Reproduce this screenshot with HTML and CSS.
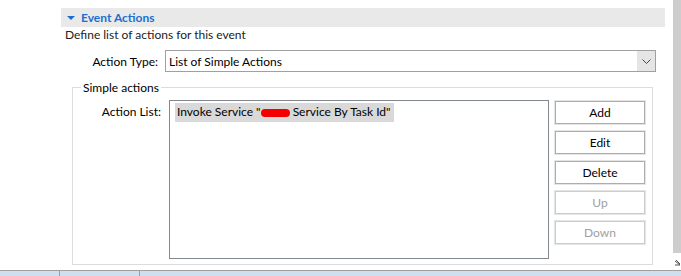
FILE: index.html
```html
<!DOCTYPE html>
<html lang="en">
<head>
  <meta charset="UTF-8">
  <meta name="viewport" content="width=device-width, initial-scale=1.0">
  <title>Event Actions</title>
  <link rel="stylesheet" href="styles.css">
</head>
<body>

  <div class="window">
    <div class="main">
      <div class="content">

        <div class="section-header">
          <span class="twisty"></span>
          <span class="section-title">Event Actions</span>
        </div>
        <div class="section-desc">Define list of actions for this event</div>

        <div class="type-row">
          <label class="field-label" for="actionType">Action Type:</label>
          <div class="combo" id="actionType">
            <span class="combo-text">List of Simple Actions</span>
            <span class="combo-btn">
              <svg width="9" height="5" viewBox="0 0 9 5"><path d="M0.5 0.5 L4.5 4.5 L8.5 0.5" fill="none" stroke="#444" stroke-width="1"/></svg>
            </span>
          </div>
        </div>

        <fieldset class="group">
          <legend>Simple actions</legend>
          <div class="group-body">
            <div class="field-label list-label">Action List:</div>
            <div class="list-box">
              <div class="list-item selected">Invoke Service "<span class="redacted"></span> Service By Task Id"</div>
            </div>
            <div class="button-col">
              <button class="btn">Add</button>
              <button class="btn">Edit</button>
              <button class="btn">Delete</button>
              <button class="btn" disabled>Up</button>
              <button class="btn" disabled>Down</button>
            </div>
          </div>
        </fieldset>

      </div>
      <div class="side">
        <div class="scrollbar"></div>
        <div class="grip">
          <svg width="6" height="6" viewBox="0 0 6 6"><path d="M0 1 L5 5 M1 0 L5 4 M0 5 L5 5" stroke="#555" stroke-width="1"/></svg>
        </div>
      </div>
    </div>
    <div class="statusbar">
      <div class="status-cell first"></div>
      <div class="status-cell second"></div>
      <div class="status-cell"></div>
    </div>
  </div>

</body>
</html>
```

FILE: styles.css
```css
body {
  margin: 0;
  background: #ffffff;
  font-family: Lato, "Liberation Sans", sans-serif;
  font-size: 12px;
  color: #000000;
}
.window {
  width: 681px;
  height: 276px;
  overflow: hidden;
  display: flex;
  flex-direction: column;
}
.main {
  height: 271px;
  display: flex;
}
.content {
  width: 604px;
  padding: 8px 8px 0 61px;
}
.side {
  width: 8px;
  display: flex;
  flex-direction: column;
}
.scrollbar {
  height: 253px;
  background: #cdcdcd;
}
.grip {
  padding: 7px 0 0 2px;
  line-height: 0;
}
.section-header {
  height: 19px;
  background: #e9e9e9;
  display: flex;
  align-items: center;
  padding-left: 6px;
}
.twisty {
  width: 0;
  height: 0;
  border-left: 4px solid transparent;
  border-right: 4px solid transparent;
  border-top: 4px solid #1b6fd1;
  margin-right: 6px;
}
.section-title {
  color: #1b6fd1;
  font-weight: bold;
}
.section-desc {
  padding-left: 4px;
  line-height: 15px;
  color: #222;
}
.type-row {
  display: flex;
  align-items: center;
  margin-top: 8px;
}
.field-label {
  width: 97px;
  text-align: right;
  padding-right: 7px;
}
.combo {
  width: 489px;
  height: 20px;
  border: 1px solid #a0a0a0;
  display: flex;
  align-items: center;
}
.combo-text {
  flex: 1;
  padding-left: 3px;
}
.combo-btn {
  width: 18px;
  height: 20px;
  background: #e5e5e5;
  display: flex;
  align-items: center;
  justify-content: center;
}
.group {
  margin: 8px 12px 0 11px;
  padding: 5px 7px 5px 8px;
  border: 1px solid #dcdcdc;
}
.group legend {
  padding: 0 2px;
  line-height: 15px;
}
.group-body {
  display: flex;
  align-items: flex-start;
}
.list-label {
  width: 80px;
  padding-right: 0;
  margin-right: 8px;
  margin-top: 4px;
}
.list-box {
  width: 368px;
  height: 153px;
  border: 1px solid #828790;
  padding: 2px 5px;
}
.list-item {
  display: inline-block;
  padding: 1px 3px 2px 2px;
  line-height: 16px;
}
.list-item.selected {
  background: #d9d9d9;
}
.redacted {
  display: inline-block;
  width: 29px;
  height: 8px;
  border-radius: 4px;
  background: #f50000;
  vertical-align: middle;
}
.button-col {
  margin-left: 6px;
  margin-top: 1px;
  display: flex;
  flex-direction: column;
  gap: 7px;
}
.btn {
  width: 90px;
  height: 23px;
  padding: 0;
  font-family: inherit;
  font-size: 12px;
  color: #000;
  background: #ffffff;
  border: 1px solid #adadad;
  box-shadow: 0 0 0 1px #e5e5e5;
}
.btn:disabled {
  color: #a0a0a0;
  border-color: #cccccc;
}
.statusbar {
  height: 5px;
  display: flex;
  border-top: 1px solid #a0a0a0;
  background: #cfdff0;
}
.status-cell {
  border-right: 1px solid #a0a0a0;
}
.status-cell.first {
  width: 59px;
}
.status-cell.second {
  width: 79px;
}
.status-cell:last-child {
  border-right: none;
}
```
